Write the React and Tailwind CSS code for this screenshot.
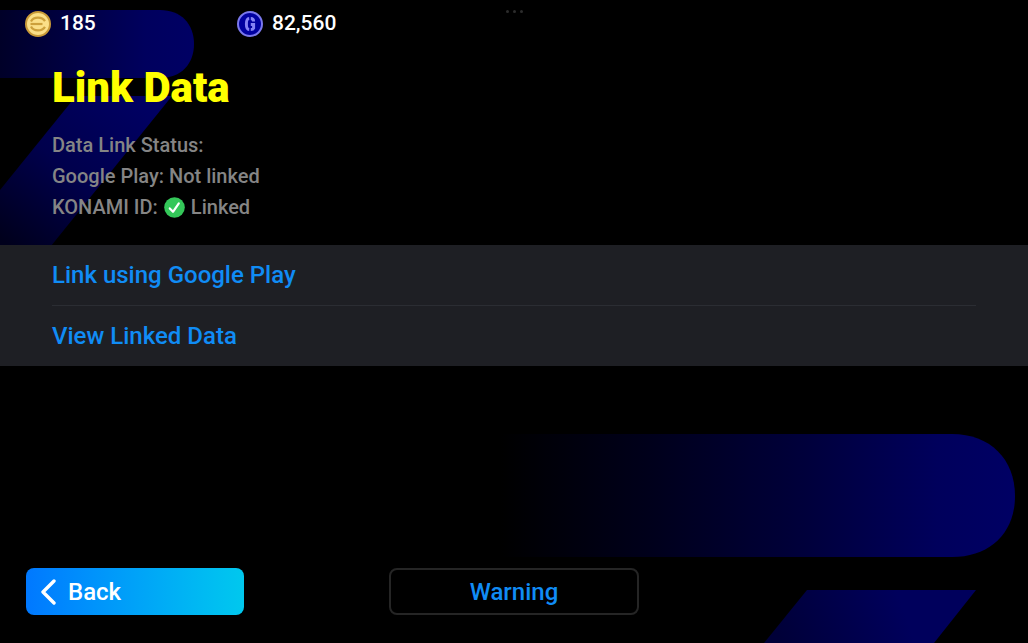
const actions = ["Link using Google Play", "View Linked Data"];

function Backdrop() {
    return (
        <div className="absolute inset-0 overflow-hidden" aria-hidden="true">
            <svg className="absolute top-0 left-0" width="200" height="246" viewBox="0 0 200 246">
                <defs>
                    <linearGradient id="barTop" x1="0" y1="0" x2="1" y2="0">
                        <stop offset="0" stopColor="#000028" />
                        <stop offset="0.75" stopColor="#00005e" />
                        <stop offset="1" stopColor="#000064" />
                    </linearGradient>
                    <linearGradient id="legTop" gradientUnits="userSpaceOnUse" x1="130" y1="96" x2="10" y2="246">
                        <stop offset="0" stopColor="#000062" />
                        <stop offset="0.5" stopColor="#00004c" />
                        <stop offset="1" stopColor="#00001c" />
                    </linearGradient>
                </defs>
                <path d="M0 10H160C181 10 194 24 194 44S181 78 160 78H0Z" fill="url(#barTop)" />
                <path d="M76 96H172L51 246H0V190Z" fill="url(#legTop)" />
            </svg>
            <svg className="absolute right-0 bottom-0" width="548" height="213" viewBox="480 430 548 213">
                <defs>
                    <linearGradient id="barBottom" gradientUnits="userSpaceOnUse" x1="500" y1="0" x2="1014" y2="0">
                        <stop offset="0" stopColor="#000000" />
                        <stop offset="0.3" stopColor="#00001c" />
                        <stop offset="0.6" stopColor="#00003c" />
                        <stop offset="0.85" stopColor="#00005c" />
                        <stop offset="1" stopColor="#000064" />
                    </linearGradient>
                    <linearGradient id="legBottom" gradientUnits="userSpaceOnUse" x1="780" y1="643" x2="900" y2="600">
                        <stop offset="0" stopColor="#000038" />
                        <stop offset="1" stopColor="#00005c" />
                    </linearGradient>
                </defs>
                <path d="M480 434H952C990 434 1015 459 1015 496S990 557 952 557H480Z" fill="url(#barBottom)" />
                <path d="M807 590H976L934 643H764Z" fill="url(#legBottom)" />
            </svg>
        </div>
    );
}

function GoldCoin() {
    return (
        <svg className="size-[26px]" viewBox="0 0 26 26" fill="none" aria-hidden="true">
            <circle cx="13" cy="13" r="12" fill="#fbdf88" stroke="#c99a38" strokeWidth="2" />
            <path d="M6 10.4C7.4 7.6 10 6.6 13 6.6s5.4 1 7 3.6M6 15.6C7.4 18.4 10 19.4 13 19.4s5.4-1 7-3.6" stroke="#cda03c" strokeWidth="2.2" />
            <path d="M5.5 13H17.5" stroke="#cda03c" strokeWidth="2.2" />
        </svg>
    );
}

function BlueCoin() {
    return (
        <svg className="size-[26px]" viewBox="0 0 26 26" fill="none" aria-hidden="true">
            <circle cx="13" cy="13" r="12" fill="#0000a0" stroke="#7a78ec" strokeWidth="2" />
            <path d="M12.2 7.4C9.8 7.6 9.4 9 9.4 13s.4 5.4 2.8 5.6M13.8 7.4C15.8 7.4 16.6 8.4 16.6 10.4M13.8 13.4H16.6V17.2C16.2 18.2 15.2 18.6 13.8 18.6" stroke="#8582f4" strokeWidth="3" />
        </svg>
    );
}

function LinkedIcon() {
    return (
        <svg className="size-[21px]" viewBox="0 0 21 21" fill="none" aria-hidden="true">
            <circle cx="10.5" cy="10.5" r="10.3" fill="#34c759" />
            <path d="M5.8 11.4L9 14.8L14.8 6.4" stroke="#fff" strokeWidth="2.2" strokeLinecap="round" strokeLinejoin="round" />
        </svg>
    );
}

export default function App() {
    return (
        <div className="relative min-h-screen bg-black text-white font-[Roboto,sans-serif]">
            <Backdrop />

            <div className="relative min-h-screen flex flex-col">
                <div className="absolute top-[10px] inset-x-0 flex justify-center gap-1" aria-hidden="true">
                    <span className="size-[3px] rounded-full bg-[#2c2c2c]" />
                    <span className="size-[3px] rounded-full bg-[#2c2c2c]" />
                    <span className="size-[3px] rounded-full bg-[#2c2c2c]" />
                </div>

                <header className="flex h-12 items-center pl-[25px] text-[21px] font-medium">
                    <div className="flex w-[212px] items-center gap-[9px]">
                        <GoldCoin />
                        <span>185</span>
                    </div>
                    <div className="flex items-center gap-[9px]">
                        <BlueCoin />
                        <span>82,560</span>
                    </div>
                </header>

                <main>
                    <section className="px-[52px]">
                        <h1 className="pt-3 text-[42px] leading-[56px] font-black text-[#ffff00]">Link Data</h1>
                        <div className="mt-[14px] mb-[22px] text-xl leading-[31px] font-medium text-[#858585]">
                            <p>Data Link Status:</p>
                            <p>Google Play: Not linked</p>
                            <p className="flex items-center gap-[6px]">
                                KONAMI ID:
                                <LinkedIcon />
                                Linked
                            </p>
                        </div>
                    </section>

                    <ul className="bg-[#1e1f24] px-[52px] divide-y divide-[#2b2d33]">
                        {actions.map((action) => (
                            <li key={action}>
                                <button type="button" className="flex h-[60px] w-full items-center text-2xl font-medium text-[#108cf5] cursor-pointer">
                                    {action}
                                </button>
                            </li>
                        ))}
                    </ul>
                </main>

                <footer className="mt-auto mb-7 grid grid-cols-[218px_1fr_218px] px-[26px] text-2xl font-medium">
                    <button
                        type="button"
                        className="flex h-[47px] items-center gap-3 rounded-lg bg-linear-to-r from-[#0078ff] to-[#00c8ee] pl-[14px] cursor-pointer"
                    >
                        <svg className="h-7 w-4" viewBox="0 0 16 28" fill="none" aria-hidden="true">
                            <path d="M14 3L3 14L14 25" stroke="#fff" strokeWidth="3.4" strokeLinecap="round" strokeLinejoin="round" />
                        </svg>
                        Back
                    </button>
                    <button
                        type="button"
                        className="h-[47px] w-[250px] justify-self-center rounded-lg border-2 border-[#252525] bg-black text-[#108cf5] cursor-pointer"
                    >
                        Warning
                    </button>
                </footer>
            </div>
        </div>
    );
}
